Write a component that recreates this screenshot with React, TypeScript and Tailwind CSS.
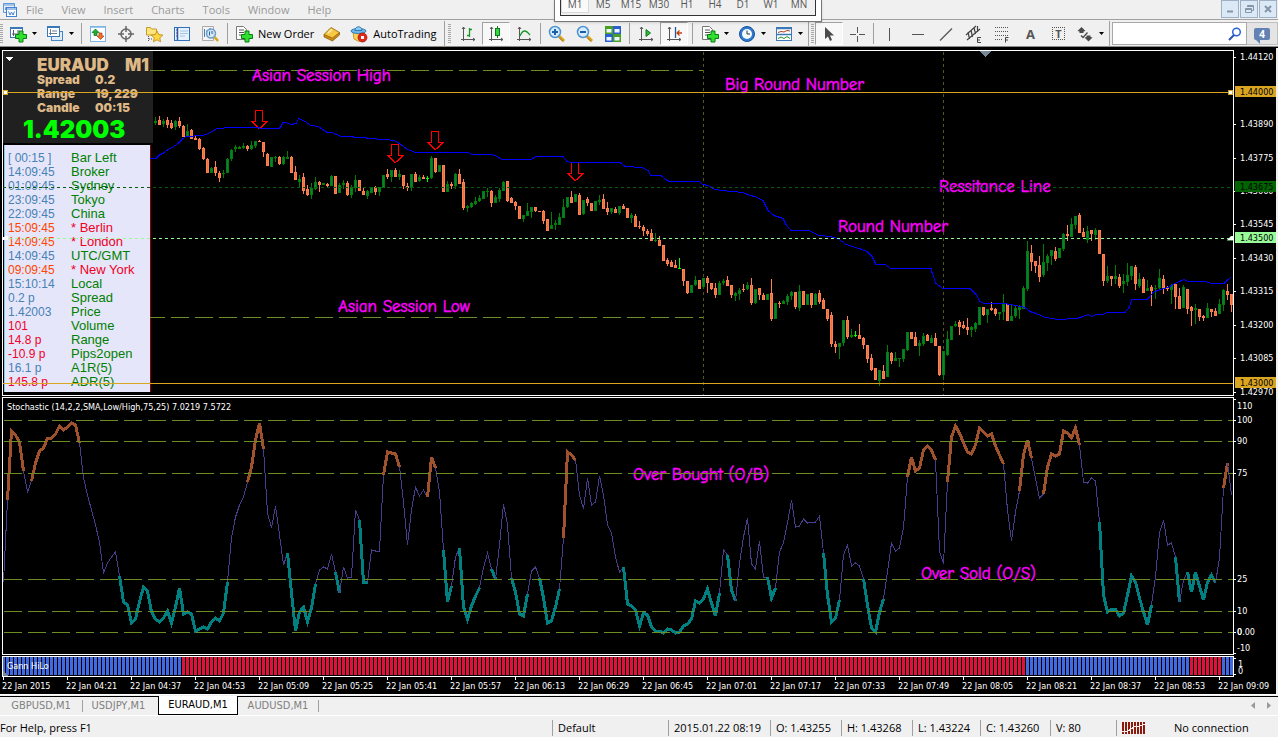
import type { ReactNode } from 'react'
import clsx from 'clsx'

type Mode = 'n' | 'o' | 't'
interface Candle { x: number; kind: string; high: number; top: number; bottom: number; low: number }

const STEP = 4

// kind + high,top,bottom,low. G = up, R = down, L = unchanged
const CANDLES = `
G117,121,123,125 R116,120,125,125 G119,121,124,127 R117,120,125,128 R120,123,128,129 G120,121,127,130 R117,121,126,128 R125,126,137,137
G124,131,137,137 R129,130,139,139 R136,138,140,140 R138,139,149,150 R147,148,159,160 R158,159,173,173 G167,168,173,173 R161,167,173,176
R171,173,178,182 G170,173,174,178 G158,159,173,173 G149,150,159,161 G145,147,149,152 G146,147,149,149 G143,146,148,149 R145,146,149,151
G141,145,149,150 G141,141,146,148 R140,141,142,142 R142,142,152,157 R153,154,166,166 G157,157,167,167 G156,157,158,162 R156,157,164,165
G156,157,164,165 G151,157,159,159 R156,157,173,173 R166,172,180,180 G175,179,182,187 R173,177,191,194 R185,189,195,196 G183,188,195,199
G177,182,189,190 R181,182,185,192 G183,183,185,185 R183,184,186,187 G175,176,186,186 R176,176,194,194 G183,185,193,193 G180,183,185,189
R181,183,195,196 G185,187,195,198 G175,180,188,192 R180,180,191,191 R188,191,195,195 G190,191,196,199 G187,187,193,193 R186,187,192,195
G187,187,192,196 G175,175,188,188 R169,174,177,179 G170,170,177,182 R168,170,177,177 G170,174,177,180 R175,175,186,189 R183,186,188,191
G174,174,188,191 R172,174,182,182 G175,177,181,182 R175,177,179,179 L176,178,179,182 G156,158,178,179 R158,158,172,173 G165,165,172,172
R165,165,192,192 G181,184,192,192 R182,184,186,189 G173,174,186,189 R169,174,184,184 R179,182,208,210 G205,206,208,212 G202,203,207,208
G197,201,204,205 G195,198,201,202 G191,191,199,199 G188,191,192,197 R190,191,203,207 G195,197,203,203 G188,190,199,202 G181,182,191,191
R181,181,201,202 R197,198,203,203 R201,202,206,210 R206,206,219,219 G215,215,219,222 G203,211,216,216 G207,207,212,218 R207,207,211,212
R211,211,212,212 R210,211,221,224 R219,219,231,231 G212,225,229,229 G220,223,225,230 G213,217,225,225 G199,207,218,218 G197,197,207,208
R191,197,203,203 G194,194,202,202 R193,195,215,215 G200,200,214,215 R197,199,203,206 R203,203,211,211 G201,201,211,211 G195,200,202,205
R194,199,209,209 R202,208,212,215 G208,208,212,214 R207,209,213,213 G206,206,213,215 R204,206,209,209 R208,208,218,218 G213,215,218,223
R214,216,227,227 R221,226,227,229 R225,227,231,236 R229,231,234,236 R229,233,241,241 G233,240,241,242 R236,240,246,246 R245,245,261,261
R258,260,264,266 R260,262,267,267 R260,265,268,268 L258,268,269,269 R269,269,281,286 R281,281,293,294 G285,285,293,293 G276,280,285,286
R280,280,289,289 G278,278,287,289 R276,278,283,293 R283,283,289,290 R283,288,295,298 G281,283,295,295 G279,281,283,285 R276,280,286,286
R285,285,295,298 G292,293,296,301 G288,290,294,300 R284,289,290,292 G282,285,289,290 R278,285,303,305 G289,289,303,304 R288,288,295,300
R293,295,300,300 G294,294,300,300 R279,293,319,321 G303,303,319,319 R301,303,304,308 G300,301,304,304 G294,296,302,305 G291,292,296,300
R292,292,307,309 G285,291,308,311 R291,291,305,305 G294,294,305,305 R293,293,305,308 G293,294,305,305 R290,293,302,304 R298,300,309,309
R309,309,319,321 R312,315,344,347 R341,344,347,353 G343,343,347,359 G320,320,343,346 R316,320,337,339 G329,335,337,338 L331,335,336,337
R324,335,339,339 R337,338,345,349 R345,345,359,363 R354,358,370,371 R368,368,380,380 G370,370,381,386 R365,371,379,379 G345,352,377,377
R352,353,361,364 G352,358,361,361 G358,358,359,367 G349,349,359,362 G332,332,350,351 R332,332,339,339 R332,337,346,346 G340,343,346,356
G333,336,344,346 R334,335,341,341 G335,338,343,343 R333,338,346,346 R346,346,375,376 G351,351,375,380 G331,339,355,356 G326,326,340,340
G321,324,326,327 R320,322,327,335 R321,325,328,329 R318,327,330,335 G326,327,330,337 G322,323,329,332 G307,307,325,325 R307,307,315,316
G309,309,315,323 R302,308,310,311 R308,309,314,316 G312,312,314,320 G294,304,312,320 R304,304,321,321 G305,316,321,321 G306,308,316,318
G305,307,310,319 G286,288,309,309 G241,251,289,291 R245,253,262,271 R261,261,266,273 R256,265,277,282 G244,262,275,277 G254,256,263,271
G250,250,256,265 R247,251,259,261 G248,248,258,258 G233,234,249,251 R225,234,236,241 G218,224,237,237 G216,216,225,229 R213,215,233,233
R228,232,237,237 G226,231,240,243 R230,230,234,241 G228,230,235,240 R230,230,254,254 R254,254,281,286 G266,276,281,283 R276,276,279,286
G265,276,279,284 R274,277,286,288 G274,281,284,293 G263,275,282,286 G266,266,276,280 R265,267,284,290 G273,279,286,288 R277,279,293,293
G280,288,291,291 R285,287,291,306 G285,288,289,299 G269,278,288,289 R275,279,288,294 R286,287,289,291 G284,285,290,304 R284,284,297,309
R288,296,309,309 G285,287,308,308 R289,289,309,314 R306,307,311,326 G304,308,310,324 R309,309,317,321 R315,316,318,321 G303,308,318,318
R309,309,312,317 R308,311,316,316 G299,304,314,314 G289,290,305,311 R284,291,295,300 R294,294,305,312`
  .trim().split(/\s+/)
  .map((s, i): Candle => {
    const [high, top, bottom, low] = s.slice(1).split(',').map(Number)
    return { x: 155 + i * STEP, kind: s[0], high, top, bottom, low }
  })

const AVERAGE = `150,158 156,158 160,154 163,153 168,149 172,147 178,143 183,138 186,136 202,135 206,134 212,131 217,128 232,127 259,127
260,128 279,128 281,126 283,122 286,122 291,124 296,123 299,118 305,121 311,125 318,126 323,129 327,132 332,132 341,136 353,136 354,137
366,137 367,138 386,139 394,140 401,144 406,148 415,152 468,152 472,154 492,154 497,156 502,159 531,159 536,156 563,156 567,161 571,162
620,162 625,166 642,167 648,170 651,175 661,175 667,180 670,181 699,181 703,184 708,185 715,189 722,190 743,192 750,195 755,196 763,200
768,210 774,215 780,217 783,218 786,224 791,230 809,230 819,235 830,236 838,238 846,244 862,249 867,251 872,256 876,264 885,264 891,268
931,268 932,272 936,283 943,288 970,288 976,294 980,301 984,303 1004,303 1016,305 1025,307 1030,311 1036,313 1041,315 1045,317 1053,318
1057,319 1077,318 1083,316 1088,314 1092,316 1096,314 1103,314 1107,312 1125,312 1129,307 1132,299 1147,299 1150,296 1153,292 1160,289
1168,287 1175,283 1184,279 1188,281 1206,281 1211,283 1224,283 1228,279 1231,277`

// o / t opens an overbought / oversold stretch, a trailing dot closes it
const STOCHASTIC = `582 o500 431 435 442 471. 492 o481 463 451 448 438 438 434 426 430 427 423 425 443. 478 495 510 525 542 573 563 557 552
t576 602 605 623 619 602 587 591 612 619 622 618 611 623 607 588 614 612 614 631 629 627 629 622 618 621 613 582. 538 517 505 497
o482 467 440 423 449. 513 528 506 535 565 t553 593 631 612 607 622 608 584. 570 567 569 554 t572 593. 567 578 577 510 t520 582 582.
550 551 551 o475 452 453 454 467. 502 545 510 487 496 490 o497 457 468. 492 t550 602 586. 557 t548 607 619 606 596 588. 568 553
t569 579. 545 504 525 t578 592 614 616 594. 571 567 t578 598 623 621 607 589. o538 452 455 460. 495 509 478 505 502 476 495 525 533
557 572 t567 604 606 610 626 613 615 627 631 631 633 629 630 633 632 626 624 619 601 603 599 589 603 616 593. 550 t555 590 601. 563
537 518 564 569 541 578 t577 598 588. 552 543 523 500 527 526 519 523 522 522 516 t553 595 622 618 600. 555 545 566 563 566 t579 605
628 632 612 599. 572 543 551 548 528 o477 457 471 468 450 446 450 460. 551 564 o482 437 426 433 443 452 454 445 428 432 436 434 446
455 464. 510 541 512 o491 455 440 458. 478 498 o494 467 454 456 454 431 433 438 428 445. 482 483 478 481 t522 595 612 609 609 616 613
595 576 582 598 612 625 605. 577 533 520 545 543 t557 602. 580 t572 592 572 586 600 582 575 583. 558 o488 463. 495`

function splitRuns(src: string) {
  const runs: { mode: Mode; pts: string[] }[] = [{ mode: 'n', pts: [] }]
  src.trim().split(/\s+/).forEach((tok, i) => {
    const p = `${3 + i * STEP},${parseInt(tok.replace(/[ot]/, ''), 10)}`
    runs[runs.length - 1].pts.push(p)
    if (tok[0] === 'o' || tok[0] === 't') runs.push({ mode: tok[0] as Mode, pts: [p] })
    if (tok.endsWith('.')) runs.push({ mode: 'n', pts: [p] })
  })
  return runs.filter((r) => r.pts.length > 1)
}

const RUNS = splitRuns(STOCHASTIC)
const LEVELS = [420, 441, 473, 579, 611, 632]
const TIMES = ['22 Jan 2015', '22 Jan 04:21', '22 Jan 04:37', '22 Jan 04:53', '22 Jan 05:09', '22 Jan 05:25', '22 Jan 05:41', '22 Jan 05:57', '22 Jan 06:13', '22 Jan 06:29', '22 Jan 06:45', '22 Jan 07:01', '22 Jan 07:17', '22 Jan 07:33', '22 Jan 07:49', '22 Jan 08:05', '22 Jan 08:21', '22 Jan 08:37', '22 Jan 08:53', '22 Jan 09:09']

const CLOCKS: [string, string, string][] = [
  ['[ 00:15 ]', 'Bar Left', 'b'], ['14:09:45', 'Broker', 'b'], ['01:09:45', 'Sydney', 'b'], ['23:09:45', 'Tokyo', 'b'], ['22:09:45', 'China', 'b'],
  ['15:09:45', '* Berlin', 'o'], ['14:09:45', '* London', 'o'], ['14:09:45', 'UTC/GMT', 'b'], ['09:09:45', '* New York', 'o'], ['15:10:14', 'Local', 'b'],
  ['0.2 p', 'Spread', 'b'], ['1.42003', 'Price', 'b'], ['101', 'Volume', 'r'], ['14.8 p', 'Range', 'r'], ['-10.9 p', 'Pips2open', 'r'],
  ['16.1 p', 'A1R(5)', 'b'], ['145.8 p', 'ADR(5)', 'r'],
]

const PRICES: [string, number][] = [['1.44120', 57], ['1.43890', 124], ['1.43775', 158], ['1.43660', 191], ['1.43545', 224], ['1.43430', 258], ['1.43315', 291], ['1.43200', 325], ['1.43085', 358], ['1.42970', 392]]
const TAGS: [string, number, string][] = [['1.44000', 92, '#daa520'], ['1.43675', 187, '#006400'], ['1.43500', 238, '#98fb98'], ['1.43000', 383, '#daa520']]
const NOTES: [string, number, number][] = [['Asian Session High', 252, 81], ['Big Round Number', 725, 90], ['Ressitance Line', 939, 192], ['Round Number', 838, 232], ['Asian Session Low', 338, 312]]

function Note({ x, y, children }: { x: number; y: number; children: ReactNode }) {
  return <text x={x} y={y} fill="#ff00ff" stroke="#ff00ff" strokeWidth="0.500" className="font-['Comic_Sans_MS','Comic_Neue','Open_Sans',sans-serif] text-[17px]">{children}</text>
}

function PriceChart() {
  return (
    <svg className="relative block h-[344px] w-full" shapeRendering="crispEdges" role="img" aria-label="EURAUD M1 price chart">
      <g transform="translate(-3 -51)">
        <path d="M980 51h11l-5.500 6z" fill="#778899" />
        <path d="M6 57h7l-3.500 4z" fill="#fff" />
        {[703.5, 943.5].map((x) => <path key={x} d={`M${x} 52V395`} stroke="#55551a" strokeDasharray="3 3" />)}
        {[70.5, 317.5].map((y) => <path key={y} d={`M150 ${y}H703`} stroke="#6b8e23" strokeDasharray="18 6" strokeDashoffset="3" />)}
        {CANDLES.map((c) => {
          const edge = c.kind === 'R' ? '#ff7f50' : c.kind === 'L' ? '#00ff00' : '#008000'
          const h = Math.max(1, c.bottom - c.top)
          return (
            <g key={c.x}>
              <rect x={c.x} y={c.high} width="1" height={Math.max(1, c.low - c.high)} fill={edge} />
              <rect x={c.x - 1} y={c.top} width="3" height={h} fill={edge} />
              {h > 2 && <rect x={c.x} y={c.top + 1} width="1" height={h - 2} fill={c.kind === 'R' ? '#e8743c' : '#0d7b52'} />}
            </g>
          )
        })}
        {[[259, 110], [395, 144], [435, 131], [575, 162]].map(([x, y]) => (
          <path key={x} d={`M${x - 3.5} ${y + 0.5}h7v11h4.500l-7.500 7l-8-7h4z`} fill="none" stroke="#ff0000" strokeWidth="1.300" />
        ))}
        <polyline points={AVERAGE} transform="translate(0 .5)" fill="none" stroke="#0000ff" strokeWidth="1" />
        <g shapeRendering="auto">{NOTES.map(([t, x, y]) => <Note key={t} x={x} y={y}>{t}</Note>)}</g>
        <line x1="3" x2="110%" y1="92.500" y2="92.500" stroke="#daa520" />
        <line x1="3" x2="110%" y1="383.500" y2="383.500" stroke="#daa520" />
        <line x1="3" x2="110%" y1="187.500" y2="187.500" stroke="#0a5a14" strokeDasharray="3 3" />
        <line x1="3" x2="110%" y1="238.500" y2="238.500" stroke="#98fb98" strokeDasharray="3 3" />
        <rect x="3.500" y="90.500" width="4" height="4" fill="#fff" stroke="#daa520" />
        <path d="M3 240v-3h2v-1h3v4z" fill="#fff" />
      </g>
      <svg x="100%" overflow="visible">
        <rect x="-4.500" y="39.500" width="4" height="4" fill="#fff" stroke="#daa520" />
        <path d="M-6 189l4-4h2v4z" fill="#fff" stroke="#98fb98" strokeWidth="0.500" />
      </svg>
    </svg>
  )
}

function QuotePanel() {
  return (
    <div className="absolute left-0 top-0 w-[150px]">
      <div className="h-[92px] bg-[#202020] pt-[7px] font-['Arial_Black','Inter',sans-serif] font-black leading-[14px] text-[#deb887]">
        <div className="flex justify-between pb-px pl-[34px] pr-1 text-[17px]"><span>EURAUD</span><span>M1</span></div>
        <dl className="grid grid-cols-[58px_1fr] pl-[34px] text-[12px]">
          <dt>Spread</dt><dd>0.2</dd>
          <dt>Range</dt><dd>19, 229</dd>
          <dt>Candle</dt><dd>00:15</dd>
        </dl>
        <p className="pl-5 text-[24px] leading-[30px] text-[#00ff00]">1.42003</p>
      </div>
      <div className="ml-px mt-0.5 w-[147px] border-l border-r border-l-[#87ceeb] border-r-[#8b0000] bg-[#e6e6fa] pb-[3px] pl-[3px] pt-[6px]">
        <table className="font-['Arial','Liberation_Sans',sans-serif] text-[12px] leading-[14px]">
          <tbody>
            {CLOCKS.map(([value, name, tone], i) => (
              <tr key={i} className="h-[14px]">
                <td className={clsx('w-[63px] p-0', tone === 'b' && 'text-[#4682b4]', tone === 'o' && 'text-[#ff4500]', tone === 'r' && 'text-[#f0002a]')}>{value}</td>
                <td className={clsx('whitespace-nowrap p-0 text-[13px] leading-[14px]', tone === 'o' ? 'text-[#f0001e]' : 'text-[#008000]')}>{name}</td>
              </tr>
            ))}
          </tbody>
        </table>
      </div>
    </div>
  )
}

function PriceAxis() {
  return (
    <svg className="block h-[346px] w-[42px] shrink-0 text-[9px]" fill="#fff" aria-label="Price scale">
      <g transform="translate(0 -50)">
        {PRICES.map(([t, y]) => <g key={t}><path d={`M0 ${y}h2v1h-2z`} /><text x="6" y={y + 3}>{t}</text></g>)}
        {TAGS.map(([t, y, color]) => (
          <g key={t}>
            <rect x="1" y={y - 6} width="41" height="11" fill={color} />
            <text x="6" y={y + 3} fill="#000">{t}</text>
          </g>
        ))}
      </g>
    </svg>
  )
}

function Oscillator() {
  return (
    <svg className="block h-[256px] w-full" role="img" aria-label="Stochastic oscillator">
      <g transform="translate(-3 -398)">
        {RUNS.map((r, i) => (
          <polyline key={i} points={r.pts.join(' ')} transform="translate(.5 0)" fill="none" shapeRendering="crispEdges"
            stroke={r.mode === 'o' ? '#a0522d' : r.mode === 't' ? '#008080' : '#483d8b'} strokeWidth={r.mode === 'n' ? 1 : 3} />
        ))}
        <Note x={633} y={480}>Over Bought (O/B)</Note>
        <Note x={921} y={579}>Over Sold (O/S)</Note>
        {LEVELS.map((y) => <line key={y} x1="4" x2="110%" y1={y + 0.5} y2={y + 0.5} stroke="#6b8e23" strokeDasharray="18 6" />)}
        <text x="7" y="410" fill="#fff" className="text-[9px]">Stochastic (14,2,2,SMA,Low/High,75,25) 7.0219 7.5722</text>
      </g>
    </svg>
  )
}

function GannStrip() {
  const bars = Array.from({ length: 308 }, (_, i) => 3 + i * STEP)
  return (
    <svg className="block h-[19px] w-full" shapeRendering="crispEdges" role="img" aria-label="Gann HiLo">
      <g transform="translate(-3 0)">
        {bars.map((x) => <rect key={x} x={x - 1} y="0" width="3" height="18" fill={x < 182 || (x > 1025 && x < 1190) || x > 1221 ? '#4169e1' : '#dc143c'} />)}
        <path d="M3 14v5h5z" fill="#778899" />
        <text x="7" y="12" fill="#fff" className="text-[9px]">Gann HiLo</text>
      </g>
    </svg>
  )
}

function Workspace() {
  return (
    <main className="border-r-2 border-[#f0f0f0] bg-black pl-0.5 pt-0.5 font-['Tahoma','DejaVu_Sans_Condensed',sans-serif]">
      <div className="flex">
        <div className="relative min-w-0 flex-1 border border-white">
          <QuotePanel />
          <PriceChart />
        </div>
        <PriceAxis />
      </div>
      <div className="mt-px flex">
        <div className="min-w-0 flex-1 border border-white"><Oscillator /></div>
        <svg className="block h-[258px] w-[42px] shrink-0 text-[9px]" fill="#fff">
          <g transform="translate(0 -397)">
            <path d="M0 399h2v1h-2zM0 653h2v1h-2z" />
            {LEVELS.map((y) => <path key={y} d={`M0 ${y}h2v1h-2z`} />)}
            {([['110', 409], ['100', 423], ['90', 444], ['75', 476], ['25', 582], ['10', 614], ['0', 635], ['0.00', 635], ['-10', 651]] as const).map(([t, y]) => <text key={t} x="3" y={y}>{t}</text>)}
          </g>
        </svg>
      </div>
      <div className="mt-px flex">
        <div className="min-w-0 flex-1 border border-white"><GannStrip /></div>
        <svg className="block h-[21px] w-[42px] shrink-0 text-[9px]" fill="#fff">
          <path d="M0 2h2v1h-2zM0 18h2v1h-2z" />
          <text x="4" y="11">1</text><text x="4" y="18">0</text>
        </svg>
      </div>
      <svg className="block h-[17px] w-full text-[9px]" fill="#fff" aria-label="Time scale">
        {TIMES.map((t, i) => <g key={t}><path d={`M${1 + i * 64} 0h1v3h-1z`} /><text x={i * 64} y="12">{t}</text></g>)}
      </svg>
    </main>
  )
}

/* ---------- toolbar ---------- */

function Icon({ children }: { children: ReactNode }) {
  return <svg viewBox="0 0 18 18" className="size-[18px] shrink-0" fill="none" aria-hidden="true">{children}</svg>
}

const PLUS = <path d="M10 6h4v3.500h3.500v4H14V17h-4v-3.500H6.500v-4H10z" fill="#2fe02f" stroke="#0a7d14" />
const AXES = <path d="M4.500 2v14M2 14.500h14M3 4l1.500-2L6 4M14 13l2 1.500-2 1.500" stroke="#555" />
const SHEET = <><path d="M1.500 1.500h7l3 3v10h-10z" fill="#fff" stroke="#777" /><path d="M4 5h5M4 7.500h5M4 10h3" stroke="#555" /></>

function Glass({ sign }: { sign: string }) {
  return (
    <Icon>
      <path d="M11 11l5 5" stroke="#d9a520" strokeWidth="3" />
      <path d="M11 12.500l4 4" stroke="#a06c10" />
      <circle cx="7" cy="7" r="5.500" fill="#d4ecfb" stroke="#4c93cf" strokeWidth="1.500" />
      <path d={sign} stroke="#1c5fa8" strokeWidth="2" />
    </Icon>
  )
}

function Tool({ label, pressed, wide, children }: { label: string; pressed?: boolean; wide?: boolean; children: ReactNode }) {
  return (
    <button type="button" aria-label={label} aria-pressed={pressed}
      className={clsx('flex h-[23px] shrink-0 items-center', wide ? 'gap-1 px-1' : 'w-7 justify-center', pressed && 'border border-b-white border-l-[#a0a0a0] border-r-white border-t-[#a0a0a0] bg-[#f8f8f8]')}>
      {children}
      {wide && <svg viewBox="0 0 7 4" className="h-1 w-[7px]" aria-hidden="true"><path d="M1 0h5L3.500 3z" fill="#000" /></svg>}
    </button>
  )
}

function Sep({ className }: { className: string }) {
  return <div className={clsx('w-px shrink-0 bg-[#a0a0a0]', className)} />
}

function Grip({ className }: { className: string }) {
  return <div className={clsx('h-5 w-[3px] shrink-0 bg-[repeating-linear-gradient(#a8a8a8_0_1px,#f0f0f0_1px_2px)]', className)} />
}

function Toolbar() {
  return (
    <div role="toolbar" className="flex h-7 items-center border-b border-t border-b-[#8a8a8a] border-t-[#a0a0a0] pt-px">
      <Grip className="mr-0.5" />
      <Tool label="New chart" wide><Icon><rect x="1.500" y="2.500" width="12" height="10" fill="#fff" stroke="#3a78b8" /><path d="M2 3.500h11" stroke="#3a78b8" /><path d="M4.500 5v6M3 9h8M9 5v3" stroke="#557" />{PLUS}</Icon></Tool>
      <Tool label="Profiles" wide><Icon><rect x="5.500" y="6.500" width="11" height="9" fill="#dcecfb" stroke="#4585c5" /><rect x="1.500" y="1.500" width="12" height="10" fill="#fff" stroke="#3a78b8" /><path d="M2 2.500h11" stroke="#3a78b8" /><path d="M4.500 4v6M3 8.500h8M6 6h5" stroke="#6a7c90" /></Icon></Tool>
      <Sep className="mx-0.5 h-[21px]" />
      <Tool label="Market Watch"><Icon><rect x="1.500" y="1.500" width="15" height="15" fill="#fff" stroke="#7db4e6" /><path d="M2 2.500h14" stroke="#9cc8f0" /><path d="M6.500 4l3.500 3.500H8v3H5v-3H3z" fill="#20b030" stroke="#0a7018" strokeWidth=".7" /><path d="M11.500 14.500L8 11h2V8h3v3h2z" fill="#f07030" stroke="#b03808" strokeWidth=".7" /></Icon></Tool>
      <Tool label="Data Window"><Icon><circle cx="9" cy="9" r="5" stroke="#666" strokeWidth="1.500" /><path d="M9 1v6M9 11v6M1 9h6M11 9h6" stroke="#666" strokeWidth="1.500" /></Icon></Tool>
      <Tool label="Navigator"><Icon><path d="M1.500 2.500h4l1 1.500h5v6h-10z" fill="#ffe680" stroke="#c89a20" /><path d="M3.500 11v6M4 14h3" stroke="#555" strokeDasharray="1 1" /><path d="M12 6l1.800 3.600 4 .5-3 2.700.8 4-3.600-2-3.600 2 .8-4-3-2.700 4-.5z" fill="#ffd740" stroke="#b8860b" strokeWidth=".8" /></Icon></Tool>
      <Tool label="Terminal"><Icon><rect x="1.500" y="2.500" width="15" height="13" fill="#e6f2fd" stroke="#2f6fbe" /><path d="M4.500 3v12" stroke="#1f5fae" strokeWidth="1.500" /><path d="M3 5h1M3 8h1M3 11h1" stroke="#d03030" /><path d="M7 6h8M7 8.500h8M7 11h5" stroke="#a9c4e0" /></Icon></Tool>
      <Tool label="Strategy Tester"><Icon><path d="M1.500 1.500h11v14h-11z" fill="#f4f4f4" stroke="#aaa" /><path d="M3.500 4v8M6 5v5M9 3v4" stroke="#4a7ab0" /><circle cx="10" cy="8.500" r="4.500" fill="#cfe6f8" fillOpacity=".8" stroke="#6c9cc8" strokeWidth="1.500" /><path d="M8.500 6.500v4M11 6v3" stroke="#2860a0" /><path d="M13.500 12l3.500 4" stroke="#d9a520" strokeWidth="2.500" /></Icon></Tool>
      <Sep className="mx-[3px] h-[21px]" />
      <button type="button" className="flex h-[23px] shrink-0 items-center gap-[5px] px-1">
        <Icon>{SHEET}{PLUS}</Icon>New Order
      </button>
      <Tool label="MetaEditor"><Icon><path d="M1 9.500L8 2.500l8.500 5-7 8z" fill="#f6c944" stroke="#a5720c" /><path d="M1 9.500l8.500 3.500 7-5.500v2.500l-7 6L1 12z" fill="#c98a14" stroke="#8c5c08" strokeWidth=".7" /><path d="M5 8l4-3.500" stroke="#fff3b8" strokeWidth="1.500" /></Icon></Tool>
      <button type="button" className="flex h-[23px] shrink-0 items-center gap-[5px] px-1">
        <Icon><path d="M3 7h11l-1 7-4 2.500L4 14z" fill="#ffd257" stroke="#b8860b" strokeWidth=".8" /><ellipse cx="8.500" cy="6" rx="7.500" ry="2.500" fill="#6eb6e6" stroke="#2f7ab5" /><path d="M5 5.500c0-5 7-5 7 0z" fill="#8ecbf2" stroke="#2f7ab5" /><circle cx="12.500" cy="12.500" r="4.500" fill="#e02818" stroke="#a01008" strokeWidth=".7" /><rect x="11" y="11" width="3" height="3" fill="#fff" /></Icon>AutoTrading
      </button>
      <Sep className="ml-1 h-[26px]" />
      <Grip className="mx-[3px]" />
      <Tool label="Bar Chart"><Icon>{AXES}<path d="M10.500 3v9M8 10.500h2.500M10.500 4.500H13" stroke="#149a24" strokeWidth="1.300" /></Icon></Tool>
      <Tool label="Candlesticks" pressed><Icon>{AXES}<path d="M10.500 1v12" stroke="#107a1c" /><rect x="8.500" y="3.500" width="4" height="7" fill="#30d840" stroke="#107a1c" /></Icon></Tool>
      <Tool label="Line Chart"><Icon>{AXES}<path d="M5 11C8 4 11 5 15 10" stroke="#149a24" strokeWidth="1.300" /></Icon></Tool>
      <Sep className="mx-0.5 h-[21px]" />
      <Tool label="Zoom In"><Glass sign="M4 7h6M7 4v6" /></Tool>
      <Tool label="Zoom Out"><Glass sign="M4 7h6" /></Tool>
      <Tool label="Tile Windows"><Icon><rect x="1" y="1" width="8" height="8" fill="#47a022" /><rect x="9" y="1" width="8" height="8" fill="#2b5fd0" /><rect x="1" y="9" width="8" height="8" fill="#2b5fd0" /><rect x="9" y="9" width="8" height="8" fill="#47a022" /><path d="M2.500 4h5v3.500h-5zM10.500 4h5v3.500h-5zM2.500 12h5v3.500h-5zM10.500 12h5v3.500h-5z" fill="#eef6ff" /></Icon></Tool>
      <Sep className="mx-0.5 h-[21px]" />
      <Tool label="Auto Scroll"><Icon>{AXES}<path d="M9 4.500v7L13.500 8z" fill="#28b838" stroke="#107a1c" /></Icon></Tool>
      <Tool label="Chart Shift" pressed><Icon>{AXES}<path d="M10.500 2v11" stroke="#245a9c" strokeWidth="1.300" /><path d="M12 8h5M14.500 5.500L12 8l2.500 2.500" stroke="#c04010" strokeWidth="1.300" /></Icon></Tool>
      <Sep className="mx-1 h-[21px]" />
      <Tool label="Indicators" wide><Icon>{SHEET}{PLUS}</Icon></Tool>
      <Tool label="Periods" wide><Icon><circle cx="9" cy="9" r="7.500" fill="#2f78d0" stroke="#17509a" /><circle cx="9" cy="9" r="5" fill="#f2f9ff" /><path d="M9 5.500V9h3" stroke="#333" /></Icon></Tool>
      <Tool label="Templates" wide><Icon><rect x="1.500" y="2.500" width="15" height="13" fill="#fff" stroke="#3a78b8" /><path d="M2 3.500h14M2 9.500h14" stroke="#3a78b8" strokeWidth="1.500" /><path d="M3 7.500l3-1 3 .5 3-1.500 3 .5" stroke="#b04020" /><path d="M3 13.500l3-1.500 3 1.500 3-2 3 2" stroke="#209030" /></Icon></Tool>
      <Sep className="h-[26px]" />
      <Grip className="ml-0.5 mr-px" />
      <Tool label="Cursor" pressed><Icon><path d="M5 2v12l3-2.500 2 4.500 2-1-2-4.500h4z" fill="#4a4a4a" /></Icon></Tool>
      <Tool label="Crosshair"><Icon><path d="M9.500 2v6M9.500 11v6M2 9.500h6M11 9.500h6" stroke="#555" /></Icon></Tool>
      <Sep className="mx-0.5 h-[21px]" />
      <Tool label="Vertical Line"><Icon><path d="M8.500 3v13" stroke="#555" /></Icon></Tool>
      <Tool label="Horizontal Line"><Icon><path d="M3 9.500h12" stroke="#555" /></Icon></Tool>
      <Tool label="Trendline"><Icon><path d="M3 15.500L15 3.500" stroke="#555" strokeWidth="1.200" /></Icon></Tool>
      <Tool label="Equidistant Channel"><Icon><path d="M1 10L11 1M2 15L15 4M3 7l1.500 7M6 5l1.500 7M9 2.500l1.500 6.500M12.500 1v6" stroke="#444" strokeWidth="1.200" /><path d="M16 12.500h-3.500v5H16M12.500 15H15" stroke="#444" /></Icon></Tool>
      <Tool label="Fibonacci Retracement"><Icon><path d="M2 2.500h13M2 6.500h13M2 10.500h13M2 14.500h8" stroke="#555" strokeDasharray="1 1" /><path d="M15.500 12.500h-3v5M12.500 15H15" stroke="#444" /></Icon></Tool>
      <Tool label="Text"><span className="text-[13px] font-bold text-[#555]">A</span></Tool>
      <Tool label="Text Label"><span className="flex size-[13px] items-center justify-center border border-dotted border-[#555] text-[11px] font-bold text-[#555]">T</span></Tool>
      <Tool label="Arrows" wide><Icon><path d="M5.500 2L9.500 6 7.500 6.500v1.500h-4V6.500L1.500 6zM12.500 16.500l-4-4 2-.5v-1.500h4V12l2 .5z" fill="#4a4a4a" /><path d="M5 10.500l2 2 4.500-5" stroke="#4a4a4a" strokeWidth="1.300" /></Icon></Tool>
      <Sep className="mr-0.5 h-[26px]" />
      <label className="flex h-[23px] min-w-0 flex-1 items-center border border-[#a8a8a8] bg-white pr-1">
        <input type="text" aria-label="Search" className="min-w-0 flex-1 bg-transparent px-1 outline-none" />
        <svg viewBox="0 0 14 14" className="size-[14px]" fill="none" aria-hidden="true"><circle cx="8.500" cy="5" r="3.800" stroke="#2a62d8" strokeWidth="1.500" /><path d="M6 8l-5 5" stroke="#2a50b8" strokeWidth="2" /></svg>
      </label>
      <button type="button" aria-label="4 messages" className="flex h-[23px] w-[31px] shrink-0 items-center justify-center border border-l-0 border-[#c0c0c0] bg-[#e4e4e4]">
        <span className="relative flex h-3 w-4 items-center justify-center rounded-xs bg-[#6481b4] text-[10px] font-bold text-white">
          4
          <svg viewBox="0 0 4 4" className="absolute left-0.5 top-3 size-1" aria-hidden="true"><path d="M0 0h4v4z" fill="#6481b4" /></svg>
        </span>
      </button>
    </div>
  )
}

function MenuBar() {
  return (
    <header className="flex h-[19px] items-center">
      <svg viewBox="0 0 16 16" className="ml-0.5 mr-2 size-4" fill="none" aria-hidden="true">
        <path d="M1.500 1.500h11v4M1.500 1.500v9h3M1.500 3h11" stroke="#5b97dc" /><path d="M3.500 8V5.500L5 7" stroke="#5b97dc" />
        <rect x="4.500" y="5.500" width="10" height="9" fill="#fff" stroke="#3f83d4" /><path d="M5 7h9M6.500 9.500L8 13l1.500-3 1.500 3 1.500-3.500" stroke="#3f83d4" />
      </svg>
      <nav className="flex gap-[18px] text-[#9a9a9a]">
        {['File', 'View', 'Insert', 'Charts', 'Tools', 'Window', 'Help'].map((m) => <button key={m} type="button">{m}</button>)}
      </nav>
      <div className="ml-auto flex gap-px self-start pr-px">
        {([['Minimize', 'M4 9.500h6'], ['Restore', 'M5.500 5V3.500h6v5H10M3.500 6.500h6v4h-6zM3.500 7.500h6M5.500 4.500h6'], ['Close', 'M4 4l6 6M10 4l-6 6']] as const).map(([t, d]) => (
          <button key={t} type="button" aria-label={t} className="flex h-[18px] w-[18px] items-center justify-center border border-[#9db0c4] bg-[#dbe8f6]">
            <svg viewBox="0 0 14 14" className="size-[14px]" fill="none" aria-hidden="true"><path d={d} stroke="#8595a8" strokeWidth={t === 'Restore' ? 1 : 2} /></svg>
          </button>
        ))}
      </div>
    </header>
  )
}

function Timeframes() {
  return (
    <div className="absolute left-[554px] top-0 flex h-[22px] w-[268px] overflow-hidden border border-t-0 border-[#777] bg-white px-[5px] pb-[5px] shadow-sm">
      <div className="flex flex-1 items-end border border-t-0 border-[#333] bg-[#f0f0f0] pb-0.5">
        {['M1', 'M5', 'M15', 'M30', 'H1', 'H4', 'D1', 'W1', 'MN'].map((t, i) => (
          <button key={t} type="button" className={clsx('h-[18px] w-7 shrink-0 border text-[10px] leading-[12px] text-[#555]', i === 0 ? 'border-[#d8d8d8] bg-[#fafafa]' : 'border-transparent')}>{t}</button>
        ))}
      </div>
    </div>
  )
}

function ChartTabs() {
  return (
    <div className="flex h-[22px] items-start border-b border-b-white border-t border-t-white pt-px font-['Tahoma','DejaVu_Sans_Condensed',sans-serif] text-[#808080]">
      <div role="tablist" className="flex h-5 flex-1 items-start border-t border-black">
        <button type="button" role="tab" className="h-[17px] w-[82px]">GBPUSD,M1</button>
        <Sep className="mt-[3px] h-3" />
        <button type="button" role="tab" className="h-[17px] w-[75px] pr-1">USDJPY,M1</button>
        <button type="button" role="tab" aria-selected="true" className="-mt-px h-[19px] w-20 border border-t-0 border-black bg-white text-black">EURAUD,M1</button>
        <button type="button" role="tab" className="h-[17px] w-20">AUDUSD,M1</button>
        <Sep className="mt-[3px] h-3" />
        <div className="ml-auto flex h-[17px] items-center gap-3 pr-[7px]">
          <button type="button" aria-label="Scroll left"><svg viewBox="0 0 4 7" className="h-[7px] w-1"><path d="M4 0v7L0 3.500z" fill="#999" /></svg></button>
          <button type="button" aria-label="Scroll right"><svg viewBox="0 0 4 7" className="h-[7px] w-1"><path d="M0 0v7l4-3.500z" fill="#999" /></svg></button>
        </div>
      </div>
    </div>
  )
}

function Cell({ className, children }: { className: string; children: ReactNode }) {
  return <div className={clsx('flex h-4 shrink-0 items-center border-l border-[#a0a0a0] pl-[5px]', className)}>{children}</div>
}

function StatusBar() {
  return (
    <footer className="flex h-[21px] items-center pt-0.5">
      <div className="min-w-0 flex-1">For Help, press F1</div>
      <Cell className="w-[116px]">Default</Cell>
      <Cell className="w-[102px]">2015.01.22 08:19</Cell>
      <Cell className="w-[71px]">O: 1.43255</Cell>
      <Cell className="w-[71px]">H: 1.43268</Cell>
      <Cell className="w-[68px]">L: 1.43224</Cell>
      <Cell className="w-[70px]">C: 1.43260</Cell>
      <Cell className="w-[66px]">V: 80</Cell>
      <Cell className="w-[162px] gap-7">
        <svg viewBox="0 0 24 12" className="h-3 w-6" shapeRendering="crispEdges" aria-hidden="true">
          {[0, 3, 6, 9, 12, 15, 18, 21].map((x) => <rect key={x} x={x} y="0" width="2" height="12" fill="#8b1a0a" />)}
          <path d="M0 10l6-1 6-4 6-1 6-2" stroke="#f0f0f0" strokeWidth="1" fill="none" />
        </svg>
        <span>No connection</span>
      </Cell>
    </footer>
  )
}

export default function App() {
  return (
    <div className="relative bg-[#f0f0f0] font-['Segoe_UI','Open_Sans',sans-serif] text-[11px] leading-4 text-black">
      <MenuBar />
      <Toolbar />
      <div className="h-px bg-black" />
      <Timeframes />
      <Workspace />
      <ChartTabs />
      <StatusBar />
    </div>
  )
}
